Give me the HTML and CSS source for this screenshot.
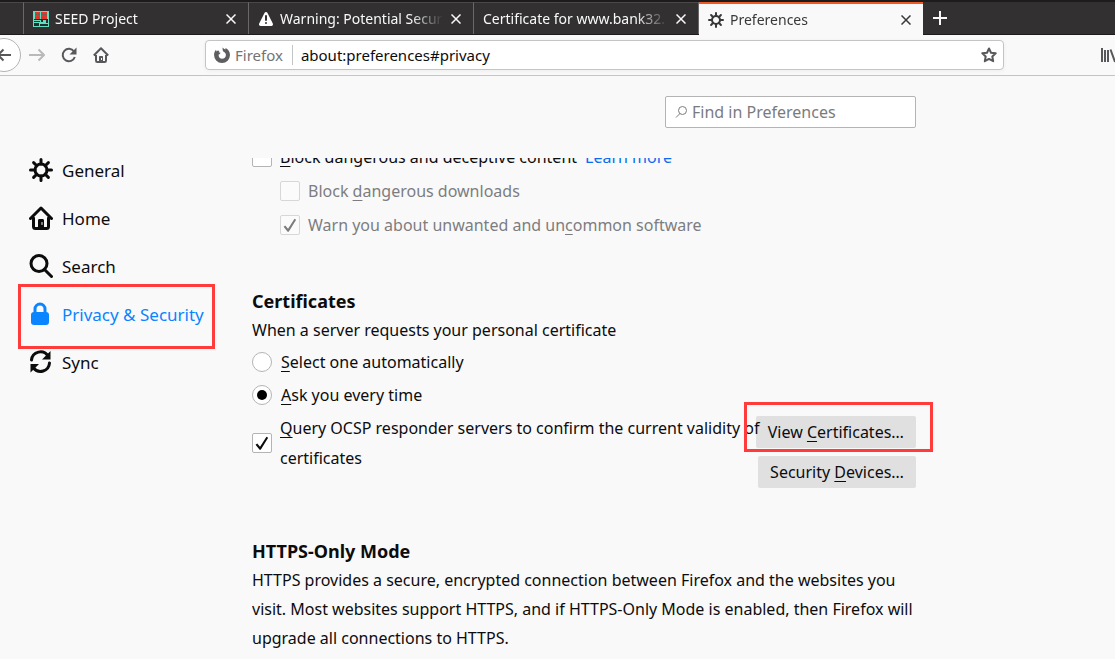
FILE: index.html
```html
<!DOCTYPE html>
<html lang="en">
<head>
<meta charset="utf-8">
<title>Preferences</title>
<link rel="stylesheet" href="styles.css">
</head>
<body>
<header class="tabs">
  <div class="tab tab-cut"></div>
  <div class="tab">
    <svg class="tab-icon" viewBox="0 0 16 16" aria-hidden="true">
      <path fill="#5fe0c0" d="M0 0h16v16H0z"/><path fill="#e8352b" d="M2 1h5v7H2zM8 1h6v7H8z"/><path fill="#23302f" d="M1 8h14v1H1zM1 10h6v1H1zM1 12h5v3H1zM8 9h2v2H8zM13 9h2v3h-2zM7 13h8v2H7z"/>
      <path stroke="#7d5a4a" stroke-width="1" d="M3 3.500h4M9 3.500h5M2 6.500h4M8 6.500h4"/>
    </svg>
    <span class="tab-title">SEED Project</span>
    <button class="close" aria-label="Close tab"><svg viewBox="0 0 10 10"><path d="M0.500 0.500l9 9M9.500 0.500l-9 9"/></svg></button>
  </div>
  <div class="tab">
    <svg class="tab-icon" viewBox="0 0 16 16" aria-hidden="true"><path fill="#fff" d="M8 1c-.7 0-1.200.3-1.500.9L1.200 12.600C.6 13.800 1.400 15 2.700 15h10.600c1.300 0 2.100-1.200 1.500-2.400L9.500 1.900C9.200 1.300 8.700 1 8 1z"/><path stroke="#323031" stroke-width="2" stroke-linecap="round" d="M8 5v4M8 12v.1"/></svg>
    <span class="tab-title">Warning: Potential Secur</span>
    <button class="close" aria-label="Close tab"><svg viewBox="0 0 10 10"><path d="M0.500 0.500l9 9M9.500 0.500l-9 9"/></svg></button>
  </div>
  <div class="tab">
    <span class="tab-title">Certificate for www.bank32.</span>
    <button class="close" aria-label="Close tab"><svg viewBox="0 0 10 10"><path d="M0.500 0.500l9 9M9.500 0.500l-9 9"/></svg></button>
  </div>
  <div class="tab tab-active">
    <svg class="tab-icon gear" viewBox="0 0 24 24" aria-hidden="true"><circle cx="12" cy="12" r="6"/><path d="M12 6V1.500M12 18v4.500M6 12H1.500M18 12h4.500M7.800 7.800L4.600 4.600M16.200 16.200l3.200 3.200M7.800 16.200l-3.200 3.200M16.200 7.800l3.200-3.200"/></svg>
    <span class="tab-title">Preferences</span>
    <button class="close" aria-label="Close tab"><svg viewBox="0 0 10 10"><path d="M0.500 0.500l9 9M9.500 0.500l-9 9"/></svg></button>
  </div>
  <button class="new-tab" aria-label="New tab"><svg viewBox="0 0 14 14"><path d="M7 0v14M0 7h14"/></svg></button>
</header>

<nav class="toolbar">
  <button class="tool back" aria-label="Back"><svg viewBox="0 0 16 16"><path d="M15 8H2M7.500 2.500L2 8l5.500 5.500"/></svg></button>
  <button class="tool forward" aria-label="Forward" disabled><svg viewBox="0 0 16 16"><path d="M0 8h15M9.500 2.500L15 8l-5.500 5.500"/></svg></button>
  <button class="tool" aria-label="Reload"><svg viewBox="0 0 16 16"><path d="M13 4.500A6.200 6.200 0 1 0 13.800 10"/><path class="solid" d="M15.500 0.500v7H8.500z"/></svg></button>
  <button class="tool" aria-label="Home"><svg viewBox="0 0 16 16"><path d="M0.800 8.500L8 1.300l7.200 7.200M3 8v5.500c0 .9.500 1.500 1.300 1.500h7.400c.8 0 1.300-.6 1.300-1.500V8"/><path class="solid" d="M6 15v-5c0-.6.400-1 1-1h2c.6 0 1 .4 1 1v5z"/><path class="knob" d="M8.500 11v2"/></svg></button>
  <div class="urlbar">
    <svg class="fx" viewBox="0 0 16 16" aria-hidden="true"><path d="M8 16a8 8 0 0 1-7.900-8.700C.2 5.400 1 4 2 2.800l.5 1.700 1.200-.9 1.700.3-.7 1.400 1.800.5-.6 1.100-1.200.7C4.300 10 6 11.800 8 11.800c2.300 0 3.900-1.700 3.900-3.800 0-1.500-.8-2.500-1.900-3.100C8.900 4.300 8.300 3 8.700.4c.8 1 1.600 1.500 2.600 2l.4-1.500C14.200 2.200 16 4.800 16 8a8 8 0 0 1-8 8z"/></svg>
    <span class="identity">Firefox</span>
    <input class="address" type="text" aria-label="Address" value="about:preferences#privacy">
    <button class="star" aria-label="Bookmark this page"><svg viewBox="0 0 16 16"><path d="M8 1.500l2 4.200 4.700.6-3.400 3.200.9 4.700L8 11.900l-4.200 2.300.9-4.700L1.300 6.300 6 5.700z"/></svg></button>
  </div>
  <button class="tool library" aria-label="Library"><svg viewBox="0 0 16 16"><path d="M2 1v14M5 3v12M8 3v12M10.500 2.500L15 15"/></svg></button>
</nav>

<div class="page">
  <aside class="sidebar">
    <a class="category" href="#general"><svg class="gear" viewBox="0 0 24 24" aria-hidden="true"><circle cx="12" cy="12" r="6"/><path d="M12 6V1.500M12 18v4.500M6 12H1.500M18 12h4.500M7.800 7.800L4.600 4.600M16.200 16.200l3.200 3.200M7.800 16.200l-3.200 3.200M16.200 7.800l3.200-3.200"/></svg>General</a>
    <a class="category" href="#home"><svg viewBox="0 0 24 24" aria-hidden="true"><path d="M1.500 12.500L12 2l10.500 10.500M4.500 12v8.500C4.500 21.800 5.300 22.500 6.500 22.500h11c1.200 0 2-.7 2-2V12"/><path class="solid" d="M9 22v-7.500c0-1 .6-1.500 1.500-1.500h3c.9 0 1.500.5 1.500 1.500V22z"/><path class="knob" d="M13 16.500v2"/></svg>Home</a>
    <a class="category" href="#search"><svg viewBox="0 0 24 24" aria-hidden="true"><circle cx="10" cy="9.500" r="8"/><path d="M15.500 15.500L22.500 22.500"/></svg>Search</a>
    <a class="category selected" href="#privacy"><svg viewBox="0 0 24 24" aria-hidden="true"><path d="M6 11V7a5 5 0 0 1 10 0v4"/><rect class="solid" x="2" y="10" width="18" height="13" rx="3"/></svg>Privacy &amp; Security</a>
    <a class="category" href="#sync"><svg viewBox="0 0 24 24" aria-hidden="true"><path d="M2.500 10A9 9 0 0 1 19 6M20.500 13A9 9 0 0 1 4.500 18"/><path class="solid" d="M21.500 1v8.500H13zM1.500 22.500V14H10z"/></svg>Sync</a>
    <span class="mark mark-category"></span>
  </aside>

  <main class="main">
    <div class="find">
      <label class="find-box">
        <svg viewBox="0 0 12 12" aria-hidden="true"><circle cx="7.500" cy="4.500" r="4"/><path d="M5 7.500L1 11.500"/></svg>
        <input type="search" placeholder="Find in Preferences" aria-label="Find in Preferences">
      </label>
    </div>
    <div class="pane">
      <div class="scrolled">
        <div class="row"><input type="checkbox" id="block"><label for="block"><u>B</u>lock dangerous and deceptive content</label><a class="learn" href="#learn">Learn more</a></div>
        <div class="row nested"><input type="checkbox" id="downloads" disabled><label for="downloads">Block <u>d</u>angerous downloads</label></div>
        <div class="row nested"><input type="checkbox" id="warn" checked disabled><label for="warn">Warn you about unwanted and un<u>c</u>ommon software</label></div>
      </div>
      <section class="certificates">
        <h2>Certificates</h2>
        <p class="lead">When a server requests your personal certificate</p>
        <div class="row choice"><input type="radio" name="cert" id="auto"><label for="auto"><u>S</u>elect one automatically</label></div>
        <div class="row choice"><input type="radio" name="cert" id="ask" checked><label for="ask"><u>A</u>sk you every time</label></div>
        <div class="ocsp">
          <div class="ocsp-option"><input type="checkbox" id="ocsp" checked><label for="ocsp"><u>Q</u>uery OCSP responder servers to confirm the current validity of<br>certificates</label></div>
          <div class="actions">
            <button class="action">View <u>C</u>ertificates…</button>
            <button class="action">Security <u>D</u>evices…</button>
          </div>
          <span class="mark mark-action"></span>
        </div>
      </section>
      <section class="https">
        <h2>HTTPS-Only Mode</h2>
        <p>HTTPS provides a secure, encrypted connection between Firefox and the websites you<br>visit. Most websites support HTTPS, and if HTTPS-Only Mode is enabled, then Firefox will<br>upgrade all connections to HTTPS.</p>
      </section>
    </div>
  </main>
</div>
</body>
</html>
```
FILE: styles.css
```css
* { box-sizing: border-box; }
body {
  margin: 0;
  height: 100vh;
  overflow: hidden;
  display: flex;
  flex-direction: column;
  background: #f9f9fa;
  color: #0c0c0d;
  font: 16px "Noto Sans", sans-serif;
}
button, input { font: inherit; color: inherit; }
button { border: 0; padding: 0; background: none; }
svg { display: block; flex: none; fill: none; stroke: currentColor; stroke-width: 2; }
svg .solid { fill: currentColor; stroke: none; }
svg .knob { stroke: #f9f9fa; stroke-width: 1; }
h2, p { margin: 0; }
u { text-underline-offset: 3px; text-decoration-thickness: 1px; text-decoration-skip-ink: none; }

.tabs {
  display: flex;
  height: 35px;
  flex: none;
  background: #323031;
  border-top: 2px solid #1d1b1c;
  border-bottom: 1px solid #1d1b1c;
  color: #f9f9fa;
  font-size: 14px;
}
.tab {
  display: flex;
  align-items: center;
  width: 225px;
  padding: 0 12px 0 9px;
  border-right: 1px solid #6a6869;
  border-top: 1px solid #4a4849;
}
.tab-cut { width: 24px; padding: 0; }
.tab-icon { width: 16px; height: 16px; margin-right: 6px; stroke: none; }
.tab-title {
  flex: 1;
  min-width: 0;
  overflow: hidden;
  white-space: nowrap;
  mask-image: linear-gradient(to left, transparent, #000 32px);
}
.tab-active {
  width: 224px;
  background: #f9f9fa;
  color: #3a3839;
  border-top: 2px solid #f05a28;
  border-right: 0;
  margin-bottom: -1px;
}
.close svg { width: 10px; height: 10px; stroke-width: 1.5; }
.close { margin-left: 8px; }
.new-tab { margin-left: 10px; }
.new-tab svg { width: 14px; height: 14px; }

.toolbar {
  display: flex;
  align-items: center;
  height: 41px;
  flex: none;
  overflow: hidden;
  border-bottom: 1px solid #c4c4c5;
  color: #58585b;
}
.tool { flex: none; width: 32px; display: flex; justify-content: center; }
.tool svg { width: 16px; height: 16px; stroke-linejoin: round; }
.back {
  width: 34px;
  height: 34px;
  margin-left: -13px;
  align-items: center;
  border: 1px solid #b4b4b5;
  border-radius: 50%;
  background: #fff;
}
.forward { color: #b9b9ba; }
.urlbar {
  flex: 1;
  display: flex;
  align-items: center;
  height: 30px;
  margin: 0 96px 0 88px;
  padding: 0 6px 0 8px;
  border: 1px solid #c4c4c5;
  border-radius: 4px;
  background: #fff;
  box-shadow: 0 1px 4px #0000000d;
}
.fx { width: 16px; height: 16px; margin-right: 5px; fill: #5e5e61; stroke: none; }
.identity { padding-right: 9px; border-right: 1px solid #c4c4c5; color: #737376; font-size: 15px; }
.address {
  flex: 1;
  min-width: 0;
  border: 0;
  padding: 0 8px;
  outline: 0;
  background: none;
  color: #0c0c0d;
  font-size: 15px;
}
.star svg { width: 16px; height: 16px; stroke-linejoin: round; }
.library { width: 16px; margin-right: -1px; }

.page { flex: 1; min-height: 0; display: flex; }
.sidebar { position: relative; flex: none; width: 252px; padding: 70px 0 0 29px; font-size: 17px; }
.category {
  display: flex;
  align-items: center;
  gap: 9px;
  height: 48px;
  color: #0c0c0d;
  text-decoration: none;
}
.category svg { width: 24px; height: 24px; stroke-width: 3; stroke-linecap: round; stroke-linejoin: round; }
.selected { color: #0a84ff; }
.gear { stroke: currentColor; stroke-width: 3; stroke-linecap: round; }
.mark { position: absolute; border: 3px solid #ff3b3b; pointer-events: none; }
.mark-category { left: 18px; top: 208px; width: 197px; height: 65px; }

.main { flex: 1; max-width: 664px; display: flex; flex-direction: column; }
.find { flex: none; height: 82px; padding-top: 20px; display: flex; justify-content: flex-end; }
.find-box {
  display: flex;
  align-items: center;
  gap: 5px;
  width: 251px;
  height: 32px;
  padding: 0 9px;
  border: 1px solid #b4b4b5;
  border-radius: 2px;
  background: #fff;
  color: #7b7b7e;
}
.find-box svg { width: 12px; height: 12px; stroke-width: 1; }
.find-box input { flex: 1; min-width: 0; border: 0; padding: 0; outline: 0; background: none; }
.find-box input::placeholder { color: #7b7b7e; }

.pane { flex: 1; min-height: 0; overflow: hidden; margin-right: -17px; padding-right: 17px; }
.scrolled { margin-top: -18px; }
.row { display: flex; align-items: center; gap: 8px; height: 34px; }
.nested { margin-left: 28px; color: #7d7d80; }
.choice { height: 33px; gap: 9px; }
.learn { color: #0a6cf0; text-decoration: none; }
input[type="checkbox"], input[type="radio"] {
  appearance: none;
  flex: none;
  display: grid;
  place-items: center;
  width: 20px;
  height: 20px;
  margin: 0;
  border: 1px solid #b4b4b5;
  border-radius: 2px;
  background: #fff;
}
input[type="radio"] { border-radius: 50%; }
input[type="radio"]:checked::before {
  content: "";
  width: 10px;
  height: 10px;
  border-radius: 50%;
  background: #000;
}
input[type="checkbox"]:checked::before {
  content: "";
  width: 14px;
  height: 14px;
  background: currentColor;
  clip-path: polygon(4% 62%, 16% 54%, 36% 76%, 82% 6%, 94% 13%, 41% 98%, 33% 98%);
}
input:disabled { border-color: #d7d7d8; background: #fbfbfc; }

.certificates { margin-top: 44px; }
h2 { font-size: 18px; line-height: 30px; }
.lead { line-height: 29px; }
.ocsp { position: relative; display: flex; justify-content: space-between; align-items: flex-start; padding-top: 2px; }
.ocsp-option {
  position: relative;
  z-index: 1;
  flex: 1;
  min-width: 0;
  display: flex;
  align-items: center;
  gap: 8px;
  line-height: 30px;
  white-space: nowrap;
}
.actions { display: flex; flex-direction: column; align-items: flex-end; gap: 8px; padding-top: 3px; }
.action { display: block; height: 32px; padding: 0 12px; border-radius: 2px; background: #e0e0e1; }
.mark-action { z-index: 2; width: 189px; height: 50px; right: -17px; top: -9px; }
.https { margin-top: 48px; }
.https p { line-height: 29px; white-space: nowrap; }
```
